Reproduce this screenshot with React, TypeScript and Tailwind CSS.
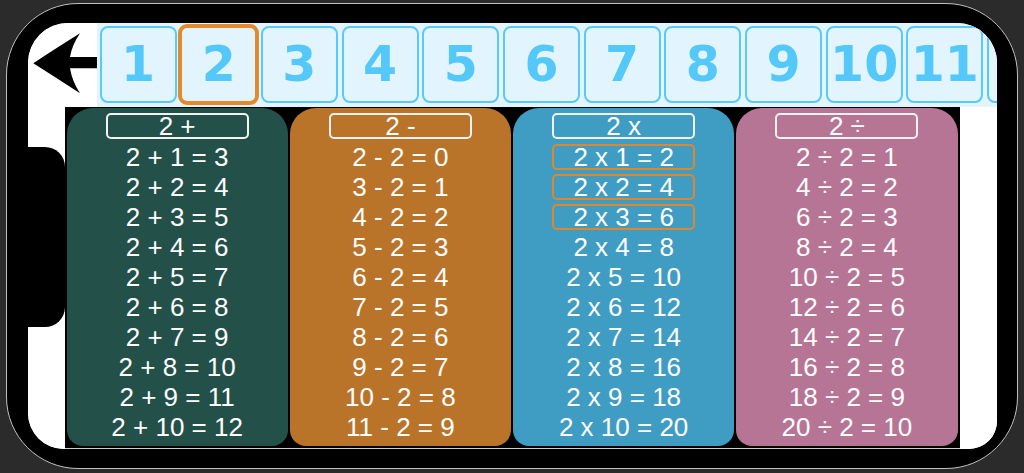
import React from "react";

const nums = [1, 2, 3, 4, 5, 6, 7, 8, 9, 10, 11, 12];

type Col = {
  bg: string;
  header: string;
  rows: string[];
};

const range = Array.from({ length: 10 }, (_, i) => i + 1);

const cols: Col[] = [
  { bg: "bg-[#24504a]", header: "2 +", rows: range.map((i) => `2 + ${i} = ${2 + i}`) },
  { bg: "bg-[#b9742a]", header: "2 -", rows: range.map((i) => `${i + 1} - 2 = ${i - 1}`) },
  { bg: "bg-[#3f9cc3]", header: "2 x", rows: range.map((i) => `2 x ${i} = ${2 * i}`) },
  { bg: "bg-[#b77596]", header: "2 ÷", rows: range.map((i) => `${2 * i} ÷ 2 = ${i}`) },
];

function BackArrow() {
  return (
    <svg width="69" height="84" viewBox="0 0 69 84">
      <path
        d="M5.3 40.3 Q30 24 52 10.3 Q44 22 42 34 L69 34 L69 45.3 L42 45.3 Q44 58 52 70.3 Q30 56 5.3 40.3 Z"
        fill="#000"
      />
    </svg>
  );
}

export default function App() {
  return (
    <div className="w-[1024px] h-[473px] bg-[#2b2b2b] pt-[3px] pl-[6px] overflow-hidden">
      <div className="w-[1012px] h-[466px] rounded-[72px] border-[1.5px] border-[#c0c0c0] bg-black pl-[20.5px] pt-[18.5px]">
        <div className="w-[969px] h-[426px] bg-white rounded-tl-[40px] rounded-tr-[40px] rounded-br-[28px] rounded-bl-[36px] overflow-hidden flex flex-col">
          {/* top row */}
          <div className="h-[84px] flex shrink-0">
            <div className="w-[69px] shrink-0 bg-white">
              <BackArrow />
            </div>
            <div className="flex-1 bg-[#e2f4fd] flex gap-[3.7px] pl-[3px] pt-[3px] overflow-hidden">
              {nums.map((n) => (
                <div
                  key={n}
                  className={
                    n === 2
                      ? "w-[77px] h-[77px] shrink-0 rounded-[7px] border-2 border-[#e38b2c] outline-[3px] outline-[#e38b2c] outline-offset-[-1px] bg-[#e2f4fd] flex items-center justify-center text-[49px] leading-none font-bold text-[#55c8fa] font-['DejaVu_Sans',sans-serif]"
                      : "w-[77px] h-[77px] shrink-0 rounded-[8px] border-2 border-[#5ac8fa] bg-[#e2f4fd] flex items-center justify-center text-[49px] leading-none font-bold text-[#55c8fa] font-['DejaVu_Sans',sans-serif]"
                  }
                >
                  {n}
                </div>
              ))}
            </div>
          </div>
          {/* bottom row */}
          <div className="h-[342px] flex shrink-0">
            <div className="w-[37px] shrink-0 flex flex-col">
              <div className="h-[40px] bg-white"></div>
              <div className="h-[180px] bg-black rounded-r-[20px]"></div>
              <div className="flex-1 bg-white"></div>
            </div>
            <div className="w-[895px] shrink-0 bg-black pt-[1px] pb-[2px] px-[2px] border-b border-[#cfcfcf] flex gap-[2px]">
              {cols.map((c, ci) => (
                <div
                  key={ci}
                  className={`flex-1 ${c.bg} rounded-t-[26px] rounded-b-[16px] flex flex-col items-center pt-[5px] font-['Liberation_Sans',Arial,sans-serif] text-white`}
                >
                  <div className="w-[143px] h-[26px] border-2 border-[#f2f2f2] rounded-[5px] flex items-center justify-center text-[26px] leading-none">
                    {c.header}
                  </div>
                  <div className="mt-[3px] flex flex-col items-center">
                    {c.rows.map((r, ri) => (
                      <div key={ri} className="h-[30px] w-[143px] flex items-center justify-center">
                        {ci === 2 && ri < 3 ? (
                          <div className="w-[143px] h-[26px] border-2 border-[#e0862b] rounded-[5px] flex items-center justify-center text-[26px] leading-none">
                            {r}
                          </div>
                        ) : (
                          <div className="text-[26px] leading-none whitespace-nowrap">{r}</div>
                        )}
                      </div>
                    ))}
                  </div>
                </div>
              ))}
            </div>
            <div className="flex-1 bg-white"></div>
          </div>
        </div>
      </div>
    </div>
  );
}
